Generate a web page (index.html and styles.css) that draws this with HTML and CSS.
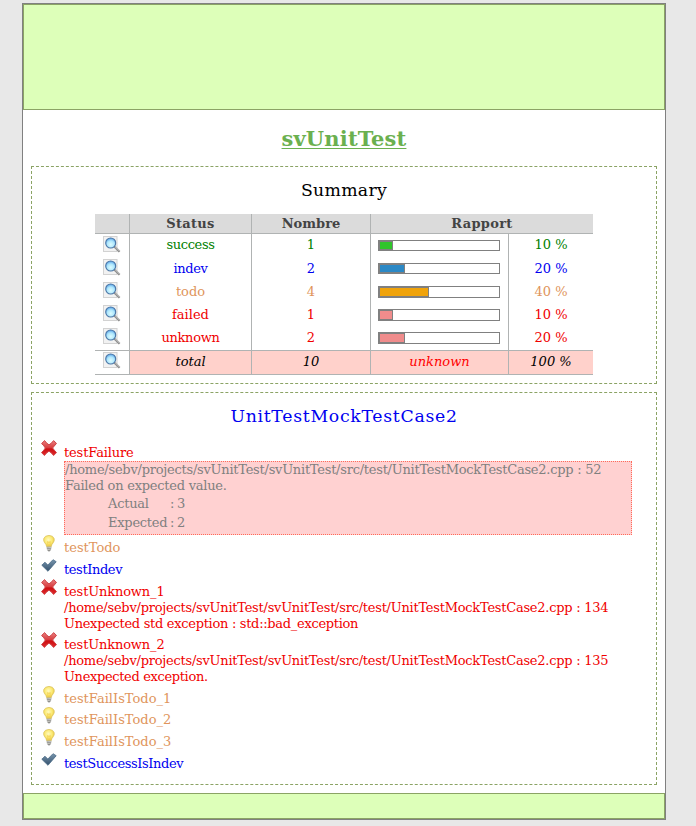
FILE: index.html
```
<!DOCTYPE html>
<html lang="en">
<head>
<meta charset="utf-8">
<title>svUnitTest</title>
<link rel="stylesheet" href="styles.css">
</head>
<body>
<svg class="defs" width="0" height="0" aria-hidden="true">
  <defs>
    <radialGradient id="lens" cx=".5" cy=".65" r=".6"><stop offset="0" stop-color="#dcfcff"/><stop offset=".6" stop-color="#aee6fc"/><stop offset="1" stop-color="#62aaea"/></radialGradient>
    <linearGradient id="red" x1="0" y1="0" x2="0" y2="1"><stop offset="0" stop-color="#e88080"/><stop offset=".5" stop-color="#d83a3c"/><stop offset=".55" stop-color="#cc0f12"/><stop offset="1" stop-color="#e02a2c"/></linearGradient>
    <radialGradient id="glow" cx=".45" cy=".4" r=".6"><stop offset="0" stop-color="#fffbc0"/><stop offset=".6" stop-color="#fbe870"/><stop offset="1" stop-color="#e8c94a"/></radialGradient>
    <linearGradient id="steel" x1="0" y1="0" x2="0" y2="1"><stop offset="0" stop-color="#7895ad"/><stop offset="1" stop-color="#34516d"/></linearGradient>
  </defs>
  <symbol id="i-find" viewBox="0 0 18 17">
    <rect x=".5" y=".5" width="13.5" height="15" fill="#f2f2f2" stroke="#d2d2d2"/>
    <path d="M11.3 10.5L16.6 15.8" stroke="#8c8c8c" stroke-width="2.2"/>
    <path d="M12 10.5L16.5 15" stroke="#ddd" stroke-width=".8"/>
    <circle cx="7.7" cy="7" r="5" fill="url(#lens)" stroke="#4a76a6" stroke-width="1.1"/>
  </symbol>
  <symbol id="i-fail" viewBox="0 0 16 16">
    <path d="M.6 3.5L3.6 .6Q6 4 8 4.8Q10 4 12.6 .6L15.5 3.4Q12.6 6.8 11.6 8Q13 10 15.5 12.6L12.6 15.5Q10 12.2 8 11.2Q6 12.2 3.4 15.5L.5 12.6Q3.4 9.8 4.3 8Q3.2 5.9 .6 3.5Z" fill="url(#red)" stroke="#cf4548" stroke-width="1"/>
  </symbol>
  <symbol id="i-todo" viewBox="0 0 16 17">
    <path d="M5.6 11.6Q5.4 9.6 3.9 8Q2.2 6 2.7 3.7Q3.7 .5 8 .4Q12.3 .5 13.2 3.7Q13.7 6 12 8Q10.5 9.6 10.3 11.6Z" fill="url(#glow)" stroke="#d9bf55" stroke-width=".7"/>
    <path d="M7.2 11L6.6 6.5L8 7.5L9.3 6.5L8.8 11" fill="none" stroke="#f0c43c" stroke-width=".6"/>
    <path d="M5.6 11.8H10.4L10 15L8 16.7L6 15Z" fill="#8f8f8c"/>
    <path d="M5.8 12.9L10 12.4M6 14.6L10 14.1" stroke="#deded8" stroke-width=".7"/>
  </symbol>
  <symbol id="i-dev" viewBox="0 0 16 13">
    <path d="M.8 6.2L4 3.2L6.8 6.1L12 .7L15.2 2.7L7 12.3Z" fill="url(#steel)" stroke="#496985" stroke-width=".8"/>
  </symbol>
</svg>
<div class="page">
  <header class="banner"></header>
  <main class="content">
    <h1>svUnitTest</h1>
    <section class="box summary">
      <h2>Summary</h2>
      <table>
        <colgroup><col class="c-icon"><col class="c-status"><col class="c-count"><col class="c-bar"><col class="c-pct"></colgroup>
        <thead><tr><th></th><th>Status</th><th class="plain">Nombre</th><th colspan="2">Rapport</th></tr></thead>
        <tbody>
          <tr class="success lead"><td class="ico"><svg><use href="#i-find"/></svg></td><td class="tight">success</td><td>1</td><td class="barcell"><div class="bar"><div class="fill" style="width:10%"></div></div></td><td>10 %</td></tr>
          <tr class="indev lead tall"><td class="ico"><svg><use href="#i-find"/></svg></td><td class="tight">indev</td><td>2</td><td class="barcell"><div class="bar"><div class="fill" style="width:20%"></div></div></td><td>20 %</td></tr>
          <tr class="todo"><td class="ico"><svg><use href="#i-find"/></svg></td><td>todo</td><td>4</td><td class="barcell"><div class="bar deep"><div class="fill" style="width:40%"></div></div></td><td>40 %</td></tr>
          <tr class="failed"><td class="ico"><svg><use href="#i-find"/></svg></td><td class="plain">failed</td><td>1</td><td class="barcell"><div class="bar deep"><div class="fill" style="width:10%"></div></div></td><td>10 %</td></tr>
          <tr class="failed"><td class="ico"><svg><use href="#i-find"/></svg></td><td class="snug">unknown</td><td>2</td><td class="barcell"><div class="bar deep"><div class="fill" style="width:20%"></div></div></td><td>20 %</td></tr>
        </tbody>
        <tfoot><tr><td class="ico"><svg><use href="#i-find"/></svg></td><td>total</td><td>10</td><td class="verdict">unknown</td><td>100 %</td></tr></tfoot>
      </table>
    </section>
    <section class="box cases">
      <h2 class="case">UnitTestMockTestCase2</h2>
      <ul>
        <li class="failed"><svg><use href="#i-fail"/></svg><div class="body"><p>testFailure</p>
          <div class="detail"><p>/home/sebv/projects/svUnitTest/svUnitTest/src/test/UnitTestMockTestCase2.cpp : 52</p><p>Failed on expected value.</p>
            <dl><dt>Actual</dt><dd>: 3</dd><dt>Expected</dt><dd>: 2</dd></dl></div></div></li>
        <li class="todo"><svg class="bulb"><use href="#i-todo"/></svg><p>testTodo</p></li>
        <li class="indev"><svg class="tick"><use href="#i-dev"/></svg><p>testIndev</p></li>
        <li class="failed"><svg><use href="#i-fail"/></svg><div class="body"><p>testUnknown_1</p><p>/home/sebv/projects/svUnitTest/svUnitTest/src/test/UnitTestMockTestCase2.cpp : 134</p><p class="snug">Unexpected std exception : std::bad_exception</p></div></li>
        <li class="failed last-error"><svg><use href="#i-fail"/></svg><div class="body"><p>testUnknown_2</p><p>/home/sebv/projects/svUnitTest/svUnitTest/src/test/UnitTestMockTestCase2.cpp : 135</p><p class="tight">Unexpected exception.</p></div></li>
        <li class="todo short"><svg class="bulb"><use href="#i-todo"/></svg><p>testFailIsTodo_1</p></li>
        <li class="todo"><svg class="bulb"><use href="#i-todo"/></svg><p>testFailIsTodo_2</p></li>
        <li class="todo"><svg class="bulb"><use href="#i-todo"/></svg><p>testFailIsTodo_3</p></li>
        <li class="indev"><svg class="tick"><use href="#i-dev"/></svg><p>testSuccessIsIndev</p></li>
      </ul>
    </section>
  </main>
  <footer class="foot"></footer>
</div>
</body>
</html>
```
FILE: styles.css
```
* { box-sizing: border-box; }
html { background: #e8e8e8; }
body { margin: 0; padding: 3px 30px 0 22px; font: 13px/16px "DejaVu Serif", serif; }
.defs { display: block; }
.page { width: 644px; height: 817px; border: 1px solid #808080; background: #fff; display: flex; flex-direction: column; }
.banner { height: 106px; flex: none; background: #ddffb9; border: 1px solid #8ba365; }
.foot { height: 26px; flex: none; background: #ddffb9; border: 1px solid #8ba365; }
.content { flex: 1; padding: 16px 8px 0; }
h1, h2, p, ul, dl, dd { margin: 0; padding: 0; }
h1 { font-size: 21px; line-height: 26px; height: 40px; text-align: center; color: #6bb04f; letter-spacing: .15px; text-decoration: underline; text-decoration-thickness: 1px; text-underline-offset: 2px; }
.box { border: 1px dashed #8ba365; }
h2 { font-size: 17.3px; line-height: 22px; font-weight: normal; text-align: center; letter-spacing: .3px; }
.summary { height: 218px; padding-top: 12px; margin-bottom: 8px; }
.cases { height: 393px; padding-top: 12px; }
table { width: 498px; margin: 13px auto 0 63px; border-collapse: separate; border-spacing: 0; table-layout: fixed; text-align: center; }
.c-icon { width: 34px; }
.c-status { width: 122px; }
.c-count { width: 119px; }
.c-bar { width: 138px; }
.c-pct { width: 85px; }
th, td { padding: 0 0 1px; border-left: 1px solid #b0b3b3; vertical-align: middle; }
th:first-child, td:first-child { border-left: 0; }
th { height: 20px; padding: 0; background: #dbdbdb; color: #444; border-bottom: 1px solid #b0b3b3; letter-spacing: .3px; }
.plain { letter-spacing: 0; }
tbody td { height: 23px; }
.tall td { height: 24px; padding-bottom: 0; }
tfoot td { height: 25px; border-top: 1px solid #b0b3b3; border-bottom: 1px solid #b0b3b3; background: #ffd1cb; font-style: italic; }
tfoot .ico { background: #fff; }
.ico, .barcell { vertical-align: top; }
.ico { padding-top: 1px; padding-bottom: 0; }
.lead .ico { padding-top: 2px; }
.ico svg { width: 18px; height: 17px; display: block; margin: 0 auto; }
.barcell { padding-top: 5px; padding-bottom: 0; }
.lead .barcell { padding-top: 6px; }
.verdict { color: #f00; }
.success { color: #008000; }
.indev { color: #0000f0; }
.todo { color: #e0955c; }
.failed { color: #f00000; }
.tight { letter-spacing: -.35px; }
.snug { letter-spacing: -.3px; }
.bar { width: 122px; height: 11px; border: 1px solid #808080; margin-left: 7px; }
.bar.deep { height: 12px; }
.fill { box-sizing: content-box; height: 7px; border: 1px solid #808080; background: #f08c8c; }
.deep .fill { height: 8px; }
.success .fill { background: #2fc52a; }
.indev .fill { background: #2b88c5; }
.todo .fill { background: #f0a30a; }
.case { color: #0000f0; letter-spacing: .7px; }
ul { list-style: none; padding: 13px 24px 0 9px; }
li { display: flex; align-items: flex-start; min-height: 22px; }
li > svg { width: 16px; height: 16px; margin-right: 7px; flex: none; }
li > .bulb { height: 17px; }
li > .tick { height: 13px; margin-top: 2px; }
li > p, .body { padding-top: 5px; }
li.indev { letter-spacing: -.4px; }
.body { flex: 1; letter-spacing: -.25px; }
.body > p:first-child { letter-spacing: -.15px; }
.short { min-height: 21px; }
.last-error { min-height: 54px; }
.detail { height: 74px; border: 1px dotted #ff6a5a; background: #ffd1d1; color: #808080; }
dl { display: grid; grid-template-columns: 62px 1fr; line-height: 19px; padding-left: 43px; }
dd { word-spacing: -1px; }
```
